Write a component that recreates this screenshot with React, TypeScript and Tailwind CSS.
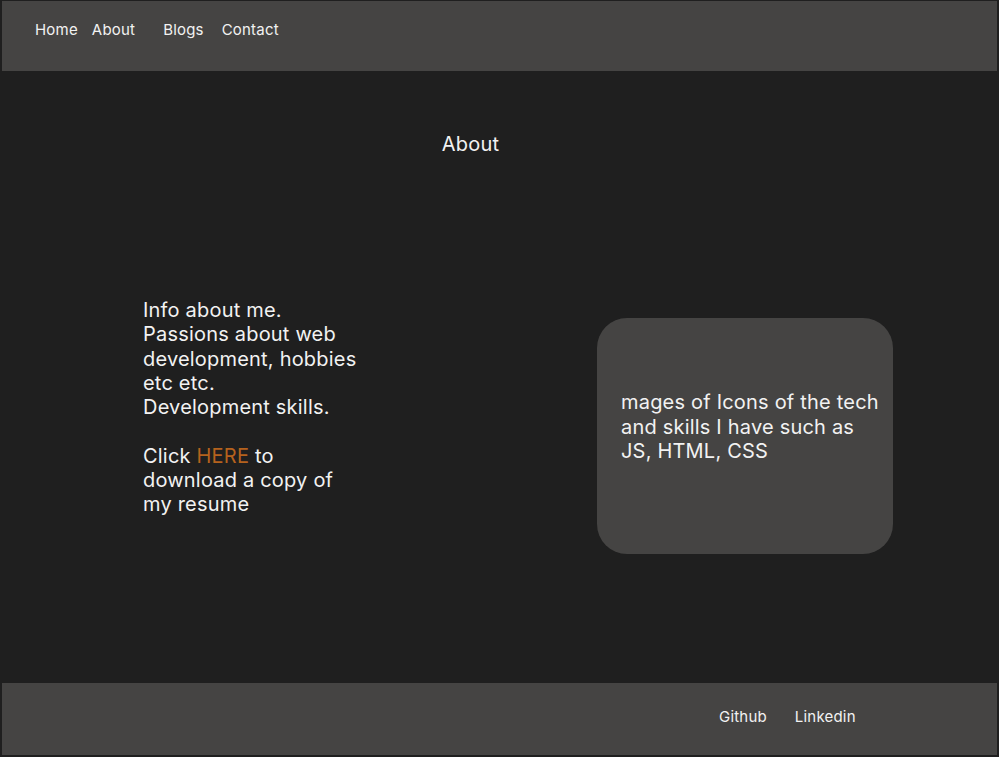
const font = { fontFamily: "Inter, 'Noto Sans', sans-serif" };

export default function App() {
  return (
    <div style={font} className="flex h-[757px] w-[999px] flex-col bg-[#1f1f1f] px-[2px] pt-[1px] pb-[2px] tracking-[0.2px] text-[#f2f2f2]">
      <header className="flex h-[70px] shrink-0 items-start bg-[#454443] pl-[33px] pt-[20px] text-[15px] leading-[18px]">
        <a className="mr-[14px]">Home</a>
        <a className="mr-[28px]">About</a>
        <a className="mr-[18px]">Blogs</a>
        <a>Contact</a>
      </header>

      <main className="flex-1 pt-[61px]">
        <h1 className="text-center text-[20px] leading-[24px] pr-[58px]">About</h1>
        <div className="flex items-start">
          <div className="ml-[141px] mt-[142px] w-[218px] text-[20px] leading-[24.3px]">
            <p>
              Info about me.
              <br />
              Passions about web development, hobbies etc etc.
              <br />
              Development skills.
            </p>
            <p className="mt-[24.3px]">
              Click <span className="text-[#b5621d]">HERE</span> to download a copy of my resume
            </p>
          </div>
          <div className="ml-[236px] mt-[162px] h-[236px] w-[296px] rounded-[30px] bg-[#454443] pl-[24px] pt-[72px]">
            <p className="w-[263px] text-[20px] leading-[24.5px]">
              mages of Icons of the tech and skills I have such as JS, HTML, CSS
            </p>
          </div>
        </div>
      </main>

      <footer className="flex h-[72px] shrink-0 items-start bg-[#454443] pl-[717px] pt-[25px] text-[15px] leading-[18px]">
        <a className="mr-[28px]">Github</a>
        <a>Linkedin</a>
      </footer>
    </div>
  );
}
